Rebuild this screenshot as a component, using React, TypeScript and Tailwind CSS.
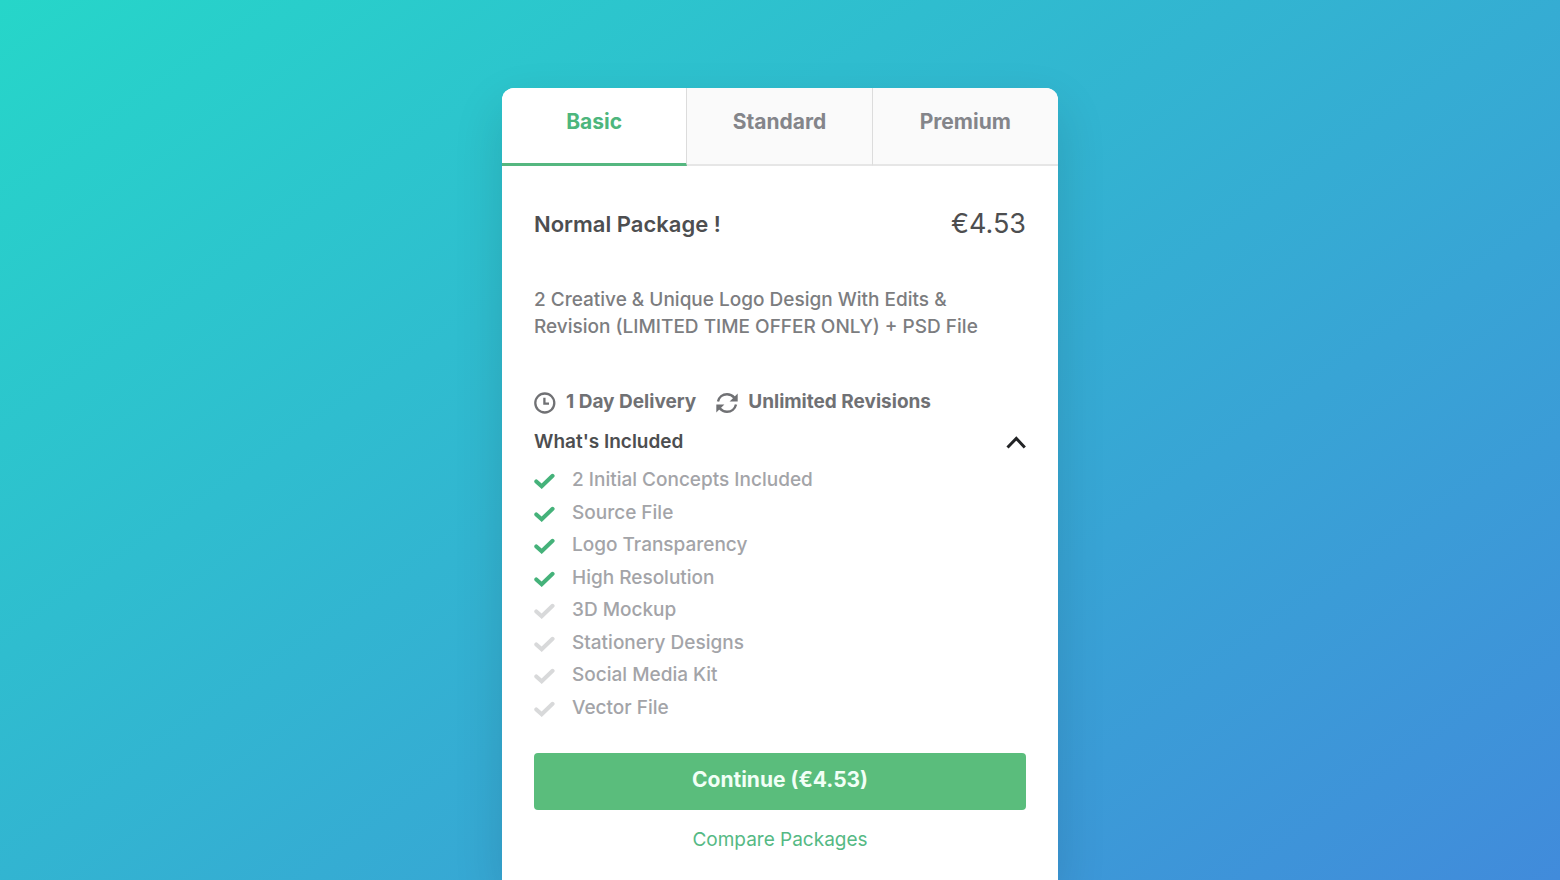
import { useState } from "react";
import clsx from "clsx";

const tabs = ["Basic", "Standard", "Premium"];

const features = [
  { label: "2 Initial Concepts Included", included: true },
  { label: "Source File", included: true },
  { label: "Logo Transparency", included: true },
  { label: "High Resolution", included: true },
  { label: "3D Mockup", included: false },
  { label: "Stationery Designs", included: false },
  { label: "Social Media Kit", included: false },
  { label: "Vector File", included: false },
];

function ClockIcon() {
  return (
    <svg viewBox="0 0 22 24" className="h-6 w-[22px]" fill="none" stroke="currentColor" strokeWidth="2.3" aria-hidden="true">
      <circle cx="10.800" cy="13" r="9.500" />
      <path d="M10.400 7.800v5.900H15" />
    </svg>
  );
}

function RefreshIcon() {
  return (
    <svg viewBox="0 -2 22 24" className="h-6 w-[22px]" fill="none" stroke="currentColor" strokeWidth="2.4" aria-hidden="true">
      <path d="M2 9.600C3 5.200 6.600 2.300 11 2.300c2.900 0 5.300 1.100 7.300 3.300" />
      <path d="M20 12.400c-1 4.400-4.600 7.300-9 7.300-2.900 0-5.300-1.100-7.300-3.300" />
      <path d="M21.700 1.500v8.100h-8.100z" fill="currentColor" stroke="none" />
      <path d="M.3 20.500v-8.100h8.100z" fill="currentColor" stroke="none" />
    </svg>
  );
}

function CheckIcon({ className }: { className?: string }) {
  return (
    <svg
      viewBox="0 0 22 18"
      className={clsx("h-[18px] w-[22px]", className)}
      fill="none"
      stroke="currentColor"
      strokeWidth="4"
      strokeLinecap="round"
      aria-hidden="true"
    >
      <path d="M2.300 10.400l5.400 4.900L18.600 4.800" />
    </svg>
  );
}

export default function App() {
  const [active, setActive] = useState(0);
  const [open, setOpen] = useState(true);

  return (
    <main className="flex min-h-screen justify-center bg-[linear-gradient(145deg,#26d6c9,#418bdb)] pt-[88px] font-['Inter',sans-serif]">
      <section className="w-full max-w-[556px] overflow-hidden rounded-t-xl bg-white shadow-[0_20px_50px_rgba(0,0,0,0.13)]">
        <div role="tablist" className="grid h-[78px] grid-cols-3">
          {tabs.map((tab, i) => (
            <button
              key={tab}
              role="tab"
              aria-selected={i === active}
              onClick={() => setActive(i)}
              className={clsx(
                "pb-2 text-[21px] font-bold",
                i < tabs.length - 1 && "border-r border-r-[#dcdcdc]",
                i === active
                  ? "border-b-3 border-b-[#55b780] bg-white text-[#4db67d]"
                  : "border-b-2 border-b-[#e6e6e6] bg-[#fafafa] text-[#84858a]"
              )}
            >
              {tab}
            </button>
          ))}
        </div>

        <div className="px-8 pt-10">
          <div className="flex h-9 items-center justify-between text-[#4d4e50]">
            <h2 className="text-[22px] font-semibold">Normal Package !</h2>
            <span className="text-[27px]">€4.53</span>
          </div>

          <p className="mt-11 text-[19px] leading-[27px] font-medium text-[#7c7d80]">
            2 Creative &amp; Unique Logo Design With Edits &amp;
            <br />
            Revision (LIMITED TIME OFFER ONLY) + PSD File
          </p>

          <div className="mt-[46px] flex h-8 items-center gap-5 text-[19px] font-bold text-[#707174]">
            <span className="flex items-center gap-[10px]">
              <ClockIcon />
              1 Day Delivery
            </span>
            <span className="flex items-center gap-[10px]">
              <RefreshIcon />
              Unlimited Revisions
            </span>
          </div>

          <button
            aria-expanded={open}
            onClick={() => setOpen(!open)}
            className="mt-2 flex h-8 w-full items-center justify-between text-[19px] font-semibold text-[#4d4e50]"
          >
            What's Included
            <svg
              viewBox="0 0 20 14"
              className={clsx("h-[14px] w-5 text-[#222325]", !open && "rotate-180")}
              fill="none"
              stroke="currentColor"
              strokeWidth="3"
              aria-hidden="true"
            >
              <path d="M1.500 12.500L10.300 3.500l8.500 9" />
            </svg>
          </button>

          {open && (
            <ul className="mt-[6px] grid h-[260px] grid-rows-8 text-[19px] font-medium text-[#a3a4a8]">
              {features.map((f) => (
                <li key={f.label} className="flex items-center gap-4">
                  <CheckIcon className={f.included ? "text-[#45b27a]" : "text-[#d8d9da]"} />
                  {f.label}
                </li>
              ))}
            </ul>
          )}

          <button className="mt-[29px] block h-[57px] w-full rounded bg-[#5abd7c] pb-1 text-[21px] font-bold text-[#f1fff6]">
            Continue (€4.53)
          </button>
          <a href="#compare" className="mx-auto mt-4 block w-fit pb-6 text-[19px] leading-[27px] text-[#55b984]">
            Compare Packages
          </a>
        </div>
      </section>
    </main>
  );
}
